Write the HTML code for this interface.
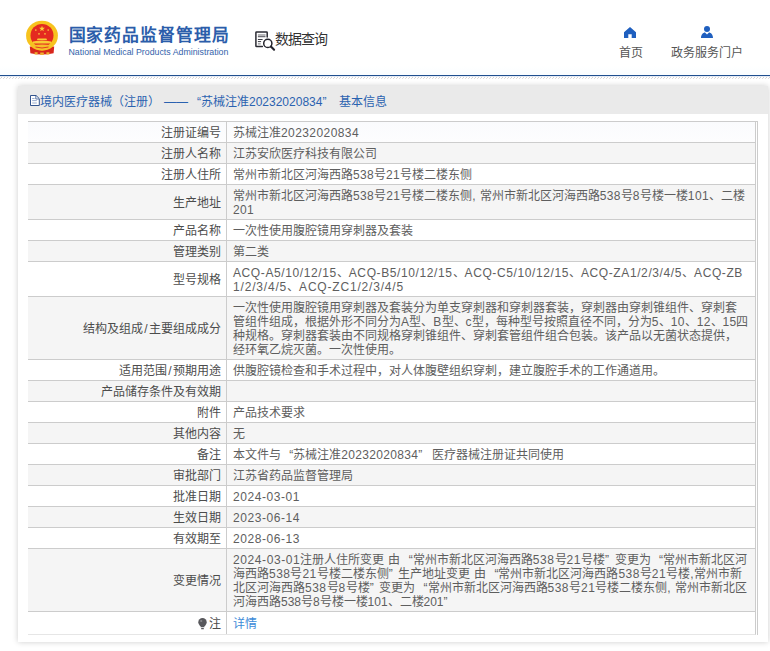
<!DOCTYPE html>
<html lang="zh-CN">
<head>
<meta charset="utf-8">
<title>国家药品监督管理局 数据查询</title>
<style>
html,body{margin:0;padding:0;}
body{width:770px;height:651px;overflow:hidden;background:#fff;position:relative;
  font-family:"Liberation Sans",sans-serif;font-size:12px;line-height:14px;color:#5e5e5e;}
*{box-sizing:border-box;}
.abs{position:absolute;white-space:nowrap;}
/* header */
#hdr{position:absolute;left:0;top:0;width:770px;height:75px;background:linear-gradient(#fff 0,#fff 66px,#f9fdff 75px);}
#hline{position:absolute;left:0;top:75px;width:770px;height:1px;background:#1f4f8f;}
#hline2{position:absolute;left:0;top:76px;width:770px;height:1px;background:#c9d6e8;opacity:.5;}
#hatch{position:absolute;left:0;top:77px;}
#cn{left:68.5px;top:26px;font-size:16.8px;line-height:20px;font-weight:bold;color:#2b5daa;letter-spacing:.95px;}
#en{left:68.5px;top:47px;font-size:8.8px;line-height:11px;color:#3563ab;}
#dq{left:275px;top:30px;font-size:14px;line-height:18px;color:#333;letter-spacing:-1px;}
.nav{font-size:12px;line-height:14px;color:#555;}
/* panel */
#panel{position:absolute;left:18px;top:86px;width:750px;height:556px;background:#fff;
  box-shadow:0 0 6px rgba(0,0,0,.2);}
#tbar{position:absolute;left:0;top:0;width:750px;height:28px;background:#eaeaea;color:#2a62b0;}
#tbar .t{position:absolute;top:9px;white-space:nowrap;}
/* table */
#tb{position:absolute;left:10px;top:35px;width:730px;border-top:1px solid #ccc;border-right:1px solid #ccc;}
.r{position:relative;width:728px;border-bottom:1px solid #ccc;border-right:1px solid #ccc;background:#fff;overflow:hidden;}
.r.g{background:#f5f5f5;}
.r.f{background:linear-gradient(#fafbfd,#fdfdfe);}
.h1{height:21px;}.h2{height:35px;}.h4{height:63px;}
.l{position:absolute;left:0;top:0;bottom:0;width:199px;border-right:1px solid #ccc;color:#4c4c4c;
  text-align:right;padding:2px 5px 0 0;white-space:nowrap;display:flex;align-items:center;justify-content:flex-end;}
.v{position:absolute;left:205px;top:4px;white-space:nowrap;}
.v span{display:block;height:14px;}
.l i{font-style:normal;margin:0 1.3px;}
.v i{font-style:normal;letter-spacing:var(--s,0);}
.v b{font-weight:normal;display:inline-block;width:8.5px;}
.v b.qo{text-align:right;}.v b.qc{text-align:left;width:9.5px;}
a{color:#3c8ad8;text-decoration:none;}
</style>
</head>
<body>
<div id="hdr"></div>
<div id="hline"></div><div id="hline2"></div><svg id="hatch" width="770" height="2"><defs><pattern id="hp" width="3" height="2" patternUnits="userSpaceOnUse"><rect x="1" y="0" width="1" height="1" fill="#d2d2d2"/><rect x="0" y="1" width="1" height="1" fill="#dcdcdc"/></pattern></defs><rect width="770" height="2" fill="url(#hp)"/></svg>

<!-- emblem -->
<svg class="abs" style="left:22px;top:16px" width="40" height="42" viewBox="22 16 40 42">
  <path d="M29.800 46.500 L30.400 53.200 Q42 56 53.600 53.200 L54.200 46.500 Z" fill="#d8261c"/>
  <path d="M34.600 52.200h3v2.400h-3zM40.200 52.600h3.600v2.400h-3.600zM46.400 52.200h3v2.400h-3z" fill="#eeb030"/>
  <ellipse cx="42" cy="35.700" rx="15.900" ry="15" fill="#f7c31e"/>
  <circle cx="42" cy="35.400" r="11.500" fill="#e42a20"/>
  <path d="M42 25.800l.75 2.050h2.150l-1.750 1.300.7 2.100L42 30l-1.850 1.250.7-2.100-1.750-1.300h2.150z" fill="#f9d23a"/>
  <circle cx="35.800" cy="30" r=".85" fill="#f5c63a"/><circle cx="48.200" cy="30" r=".85" fill="#f5c63a"/>
  <circle cx="39" cy="33.800" r=".85" fill="#f5c63a"/><circle cx="45" cy="33.800" r=".85" fill="#f5c63a"/>
  <path d="M37.600 38.400h8.800l.6 1.700h-10z M33 41.600 Q42 39.200 51 41.600 L51.300 43.400 H32.700z" fill="#f8cc34"/>
  <path d="M32 45.200 Q42 43.800 52 45.200 Q49.500 50 42 50.300 Q34.500 50 32 45.200Z" fill="#f6bf2a"/>
  <path d="M35.500 47 Q42 49 48.500 47" fill="none" stroke="#e0301f" stroke-width=".9"/>
</svg>
<div id="cn" class="abs">国家药品监督管理局</div>
<div id="en" class="abs">National Medical Products Administration</div>

<!-- data query icon -->
<svg class="abs" style="left:254px;top:30px" width="23" height="22" viewBox="0 0 23 22">
  <path d="M13.200 7V2.600Q13.200 1.900 12.500 1.900H2.600Q1.900 1.900 1.900 2.600V15.900Q1.900 16.600 2.600 16.600H8.400" fill="none" stroke="#2b2b33" stroke-width="1.500" stroke-linecap="round"/>
  <path d="M3.900 5h7.600M3.900 6.600h7.600" stroke="#6e6e74" stroke-width="1.100"/>
  <path d="M3.900 9.500h4.700M3.900 11.600h3.200" stroke="#3a3a42" stroke-width="1"/>
  <path d="M3.900 13.900h2.800" stroke="#77777c" stroke-width="1"/>
  <circle cx="13.800" cy="13.400" r="4.100" fill="#fff" stroke="#24242c" stroke-width="1.500"/>
  <path d="M16.900 16.500l3.200 3.200" stroke="#24242c" stroke-width="2.100" stroke-linecap="round"/>
</svg>
<div id="dq" class="abs">数据查询</div>

<!-- nav -->
<svg class="abs" style="left:624px;top:27px" width="12" height="11" viewBox="0 0 12 11">
  <path d="M6 0L0 5.200V11h4.300V7.200h3.400V11H12V5.200z" fill="#1f5fbf"/>
</svg>
<div class="abs nav" style="left:619px;top:46px">首页</div>
<svg class="abs" style="left:701px;top:26px" width="12" height="12" viewBox="0 0 12 12">
  <circle cx="6" cy="3" r="3" fill="#1f5fbf"/>
  <path d="M0 12c0-3.500 2.200-5.600 4-5.600L6 8.500 8 6.400c1.800 0 4 2.100 4 5.600z" fill="#1f5fbf"/>
</svg>
<div class="abs nav" style="left:671px;top:46px">政务服务门户</div>

<div id="panel">
  <div id="tbar">
    <svg style="position:absolute;left:11.500px;top:9px" width="10" height="11" viewBox="0 0 10 11">
      <path d="M.5.5h5.600l3.200 3.200v6.800H.5z" fill="#fff" stroke="#34558f" stroke-width="1"/>
      <path d="M5.800.8v3.200h3.200" fill="none" stroke="#34558f" stroke-width=".8"/>
      <path d="M2.200 3.500h2.400M2.200 5.600h4.600M2.200 8h4.600" stroke="#8da3c8" stroke-width=".9"/>
    </svg>
    <span class="t" style="left:22px">境内医疗器械（注册）</span>
    <span class="t" style="left:146px">——</span>
    <span class="t" style="left:179px">“苏械注准20232020834”</span>
    <span class="t" style="left:321px">基本信息</span>
  </div>
  <div id="tb">
    <div class="r f h1"><div class="l">注册证编号</div><div class="v"><span style="--s:0.416px">苏械注准<i>20232020834</i></span></div></div>
    <div class="r g h1"><div class="l">注册人名称</div><div class="v"><span>江苏安欣医疗科技有限公司</span></div></div>
    <div class="r h1"><div class="l">注册人住所</div><div class="v"><span style="--s:0.322px">常州市新北区河海西路<i>538</i>号<i>21</i>号楼二楼东侧</span></div></div>
    <div class="r g h2"><div class="l">生产地址</div><div class="v"><span style="--s:0.371px">常州市新北区河海西路<i>538</i>号<i>21</i>号楼二楼东侧<i>, </i>常州市新北区河海西路<i>538</i>号<i>8</i>号楼一楼<i>101</i>、二楼</span><span style="--s:0.323px"><i>201</i></span></div></div>
    <div class="r h1"><div class="l">产品名称</div><div class="v"><span>一次性使用腹腔镜用穿刺器及套装</span></div></div>
    <div class="r g h1"><div class="l">管理类别</div><div class="v"><span>第二类</span></div></div>
    <div class="r h2"><div class="l">型号规格</div><div class="v"><span style="--s:0.602px"><i>ACQ-A5/10/12/15</i>、<i>ACQ-B5/10/12/15</i>、<i>ACQ-C5/10/12/15</i>、<i>ACQ-ZA1/2/3/4/5</i>、<i>ACQ-ZB</i></span><span style="--s:0.816px"><i>1/2/3/4/5</i>、<i>ACQ-ZC1/2/3/4/5</i></span></div></div>
    <div class="r g h4"><div class="l">结构及组成<i>/</i>主要组成成分</div><div class="v"><span>一次性使用腹腔镜用穿刺器及套装分为单支穿刺器和穿刺器套装，穿刺器由穿刺锥组件、穿刺套</span><span style="--s:0.27px">管组件组成，根据外形不同分为<i>A</i>型、<i>B</i>型、<i>c</i>型，每种型号按照直径不同，分为<i>5</i>、<i>10</i>、<i>12</i>、<i>15</i>四</span><span>种规格。穿刺器套装由不同规格穿刺锥组件、穿刺套管组件组合包装。该产品以无菌状态提供，</span><span>经环氧乙烷灭菌。一次性使用。</span></div></div>
    <div class="r h1"><div class="l">适用范围<i>/</i>预期用途</div><div class="v"><span>供腹腔镜检查和手术过程中，对人体腹壁组织穿刺，建立腹腔手术的工作通道用。</span></div></div>
    <div class="r g h1"><div class="l">产品储存条件及有效期</div><div class="v"></div></div>
    <div class="r h1"><div class="l">附件</div><div class="v"><span>产品技术要求</span></div></div>
    <div class="r g h1"><div class="l">其他内容</div><div class="v"><span>无</span></div></div>
    <div class="r h1"><div class="l">备注</div><div class="v"><span style="--s:0.338px">本文件与<i> </i><b class="qo">“</b>苏械注准<i>20232020834</i><b class="qc">”</b><i> </i>医疗器械注册证共同使用</span></div></div>
    <div class="r g h1"><div class="l">审批部门</div><div class="v"><span>江苏省药品监督管理局</span></div></div>
    <div class="r h1"><div class="l">批准日期</div><div class="v"><span style="--s:0.561px"><i>2024-03-01</i></span></div></div>
    <div class="r g h1"><div class="l">生效日期</div><div class="v"><span style="--s:0.561px"><i>2023-06-14</i></span></div></div>
    <div class="r h1"><div class="l">有效期至</div><div class="v"><span style="--s:0.561px"><i>2028-06-13</i></span></div></div>
    <div class="r g h4"><div class="l">变更情况</div><div class="v"><span style="--s:0.594px"><i>2024-03-01</i>注册人住所变更<i> </i>由<i> </i><b class="qo">“</b>常州市新北区河海西路<i>538</i>号<i>21</i>号楼<b class="qc">”</b>变更为<i> </i><b class="qo">“</b>常州市新北区河</span><span style="--s:0.476px">海西路<i>538</i>号<i>21</i>号楼二楼东侧<b class="qc">”</b>生产地址变更<i> </i>由<i> </i><b class="qo">“</b>常州市新北区河海西路<i>538</i>号<i>21</i>号楼<i>,</i>常州市新</span><span style="--s:0.49px">北区河海西路<i>538</i>号<i>8</i>号楼<b class="qc">”</b>变更为<i> </i><b class="qo">“</b>常州市新北区河海西路<i>538</i>号<i>21</i>号楼二楼东侧<i>, </i>常州市新北区</span><span style="--s:-0.028px">河海西路<i>538</i>号<i>8</i>号楼一楼<i>101</i>、二楼<i>201</i><b class="qc">”</b></span></div></div>
    <div class="r h1" style="height:23px;border-bottom-color:#e6e6e6"><div class="l"><svg width="9" height="12" viewBox="0 0 9 12" style="margin-right:2px"><circle cx="4.5" cy="4.300" r="4.200" fill="#58585c"/><path d="M2.600 7.500h3.800v1.800H2.600zM3.200 10h2.600v1.200H3.200z" fill="#58585c"/><circle cx="3.200" cy="3" r="1.100" fill="#8a8a8e"/></svg>注</div><div class="v" style="top:5px"><a>详情</a></div></div>
  </div>
</div>
</body>
</html>
